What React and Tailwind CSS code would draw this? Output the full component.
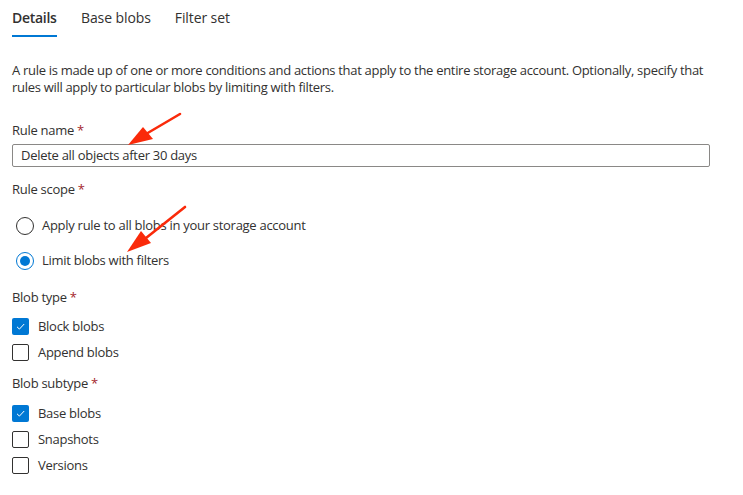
import React from "react";

const Req = () => <span className="text-[#a4262c]"> *</span>;

function Checkbox({ checked, label }) {
  return (
    <div className="flex items-center h-[26px]">
      {checked ? (
        <div className="w-[17px] h-[17px] rounded-[2px] bg-[#0078d4] flex items-center justify-center">
          <svg width="11" height="11" viewBox="0 0 11 11" fill="none">
            <path d="M2 5.8 L4.4 8.1 L9.2 3" stroke="white" strokeWidth="1" />
          </svg>
        </div>
      ) : (
        <div className="w-[17px] h-[17px] rounded-[2px] border border-[#323130]" />
      )}
      <span className="ml-[9px]">{label}</span>
    </div>
  );
}

function Radio({ checked, label }) {
  return (
    <div className="flex items-center h-[35px]">
      {checked ? (
        <div className="w-[18px] h-[18px] rounded-full border border-[#0078d4] flex items-center justify-center ml-[4px]">
          <div className="w-[10px] h-[10px] rounded-full bg-[#0078d4]" />
        </div>
      ) : (
        <div className="w-[18px] h-[18px] rounded-full border border-[#323130] ml-[4px]" />
      )}
      <span className="ml-[8px]">{label}</span>
    </div>
  );
}

export default function App() {
  return (
    <div className="relative w-[743px] h-[495px] bg-white text-[#323130] text-[13px] leading-[17px] tracking-[-0.28px] overflow-hidden" style={{ fontFamily: '"Open Sans", "Noto Sans", sans-serif' }}>
      <div className="pl-[12px]">
        <div className="flex gap-[24px] h-[37px] text-[14px] tracking-[-0.1px]">
          <div className="w-[45px] h-[37px] flex flex-col justify-between pt-[9px]">
            <span className="font-semibold text-[#323130] whitespace-nowrap tracking-[-0.3px]">Details</span>
            <div className="h-[2px] bg-[#0078d4] w-[45px]" />
          </div>
          <div className="pt-[9px] text-[#323130]">Base blobs</div>
          <div className="pt-[9px] text-[#323130]">Filter set</div>
        </div>
        <p className="mt-[25px] tracking-[-0.3px]">
          <span className="block whitespace-nowrap">A rule is made up of one or more conditions and actions that apply to the entire storage account. Optionally, specify that</span>
          <span className="block whitespace-nowrap">rules will apply to particular blobs by limiting with filters.</span>
        </p>
        <div className="mt-[26px]">Rule name<Req /></div>
        <div className="mt-[5px] w-[698px] h-[23px] border border-[#8a8886] rounded-[2px] flex items-center pl-[8px]">
          Delete all objects after 30 days
        </div>
        <div className="mt-[14px]">Rule scope<Req /></div>
        <div className="mt-[10px]">
          <Radio checked={false} label="Apply rule to all blobs in your storage account" />
          <Radio checked={true} label="Limit blobs with filters" />
        </div>
        <div className="mt-[11px]">Blob type<Req /></div>
        <div className="mt-[7px]">
          <Checkbox checked label="Block blobs" />
          <Checkbox label="Append blobs" />
        </div>
        <div className="mt-[10px]">Blob subtype<Req /></div>
        <div className="mt-[8px]">
          <Checkbox checked label="Base blobs" />
          <Checkbox label="Snapshots" />
          <Checkbox label="Versions" />
        </div>
      </div>
      <svg className="absolute left-0 top-0 pointer-events-none" width="743" height="495">
        <line x1="180" y1="114" x2="146" y2="134" stroke="#fa2a0a" strokeWidth="2.6" strokeLinecap="round" />
        <polygon points="128,145 143,127 153,139" fill="#fa2a0a" />
        <line x1="185" y1="207" x2="146" y2="238" stroke="#fa2a0a" strokeWidth="2.6" strokeLinecap="round" />
        <polygon points="127,252 141,231 151,243" fill="#fa2a0a" />
      </svg>
    </div>
  );
}
